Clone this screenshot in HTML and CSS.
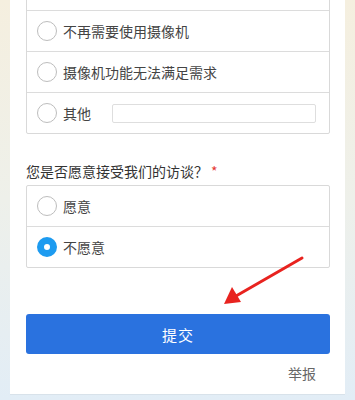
FILE: index.html
```html
<!DOCTYPE html>
<html lang="zh">
<head>
<meta charset="utf-8">
<link rel="stylesheet" href="styles.css">
</head>
<body>
<div class="card">
  <div class="group first">
    <div class="row"><span class="radio"></span></div>
    <div class="row"><span class="radio"></span><span class="label">不再需要使用摄像机</span></div>
    <div class="row"><span class="radio"></span><span class="label">摄像机功能无法满足需求</span></div>
    <div class="row"><span class="radio"></span><span class="label">其他</span><span class="other-input"></span></div>
  </div>
  <div class="question">您是否愿意接受我们的访谈？<span class="req">*</span></div>
  <div class="group">
    <div class="row"><span class="radio"></span><span class="label">愿意</span></div>
    <div class="row"><span class="radio checked"></span><span class="label">不愿意</span></div>
  </div>
  <button class="submit">提交</button>
  <div class="report">举报</div>
</div>
<svg class="arrow" width="355" height="400" viewBox="0 0 355 400">
  <line x1="302" y1="258" x2="236" y2="296" stroke="#e8231f" stroke-width="3" stroke-linecap="round"/>
  <polygon points="224,304 232,287 241,302" fill="#e8231f"/>
</svg>
</body>
</html>
```
FILE: styles.css
```css
html, body {
  margin: 0;
  padding: 0;
}
body {
  width: 355px;
  height: 400px;
  overflow: hidden;
  position: relative;
  background: linear-gradient(180deg, #f5efdf 0%, #eef0ea 50%, #e2edf6 100%);
  font-family: "Noto Sans CJK SC", "Noto Sans", sans-serif;
  color: #333;
}
.card {
  margin: 0 10px;
  height: 395px;
  background: #fff;
  border-bottom: 1px solid #d8e2ea;
  padding: 0 15px 0 16px;
  box-sizing: border-box;
  overflow: hidden;
}
.group {
  border: 1px solid #d9d9d9;
  border-radius: 2px;
}
.group.first {
  margin-top: -31px;
}
.row {
  height: 40px;
  display: flex;
  align-items: center;
  padding-left: 10px;
  font-size: 14px;
}
.row + .row {
  border-top: 1px solid #dcdcdc;
}
.radio {
  width: 18px;
  height: 18px;
  border: 1px solid #bdbdbd;
  border-radius: 50%;
  box-sizing: content-box;
  margin-right: 6px;
  flex: none;
  background: #fff;
}
.radio.checked {
  width: 6px;
  height: 6px;
  border: 7px solid #1d9bf0;
}
.label {
  color: #444;
  line-height: 20px;
}
.other-input {
  width: 202px;
  height: 17px;
  margin-left: 21px;
  border: 1px solid #dedede;
  border-radius: 2px;
}
.question {
  margin-top: 27px;
  margin-bottom: 4px;
  font-size: 14px;
  line-height: 20px;
  color: #333;
}
.req {
  color: #e53935;
  margin-left: 3px;
}
.submit {
  display: block;
  width: 100%;
  height: 40px;
  margin-top: 46px;
  border: none;
  border-radius: 3px;
  background: #2a72df;
  color: #fff;
  font-family: "Noto Sans CJK SC", "Noto Sans", sans-serif;
  font-size: 15px;
  letter-spacing: 1px;
}
.report {
  margin-top: 9px;
  text-align: right;
  padding-right: 14px;
  font-size: 14px;
  line-height: 20px;
  color: #666;
}
.arrow {
  position: absolute;
  left: 0;
  top: 0;
  pointer-events: none;
}
```
